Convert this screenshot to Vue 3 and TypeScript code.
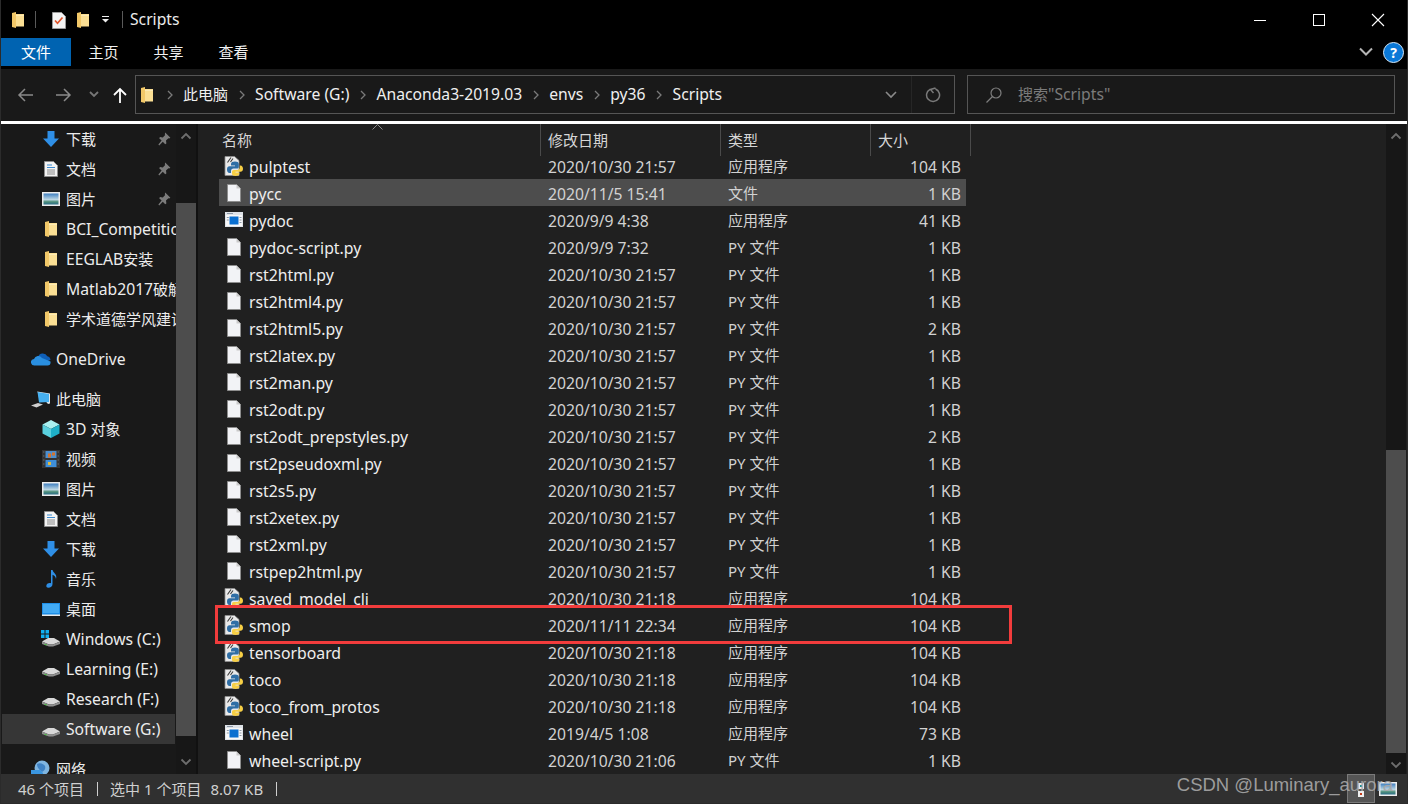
<script setup lang="ts">
interface NavItem { label: string; icon: string; sub: boolean; pin?: boolean; gap?: boolean; active?: boolean }
interface FileRow { name: string; date: string; type: string; size: string; icon: string; selected?: boolean }
interface Run { text: string; cjk: boolean }

const crumbs: string[] = ['此电脑', 'Software (G:)', 'Anaconda3-2019.03', 'envs', 'py36', 'Scripts']
const tabs: string[] = ['主页', '共享', '查看']
const searchLabel = '搜索"Scripts"'

function runs(text: string): Run[] {
  const parts = text.match(/[\u4e00-\u9fff]+|[^\u4e00-\u9fff]+/g) ?? []
  return parts.map((p) => ({ text: p, cjk: /[\u4e00-\u9fff]/.test(p) }))
}

const nav: NavItem[] = [
  { label: '下载', icon: 'i-down', sub: true, pin: true },
  { label: '文档', icon: 'i-doc', sub: true, pin: true },
  { label: '图片', icon: 'i-pic', sub: true, pin: true },
  { label: 'BCI_Competition', icon: 'i-folder', sub: true },
  { label: 'EEGLAB安装', icon: 'i-folder', sub: true },
  { label: 'Matlab2017破解版', icon: 'i-folder', sub: true },
  { label: '学术道德学风建设', icon: 'i-folder', sub: true },
  { label: 'OneDrive', icon: 'i-cloud', sub: false, gap: true },
  { label: '此电脑', icon: 'i-pc', sub: false, gap: true },
  { label: '3D 对象', icon: 'i-cube', sub: true },
  { label: '视频', icon: 'i-film', sub: true },
  { label: '图片', icon: 'i-pic', sub: true },
  { label: '文档', icon: 'i-doc', sub: true },
  { label: '下载', icon: 'i-down', sub: true },
  { label: '音乐', icon: 'i-music', sub: true },
  { label: '桌面', icon: 'i-desk', sub: true },
  { label: 'Windows (C:)', icon: 'i-win', sub: true },
  { label: 'Learning (E:)', icon: 'i-drive', sub: true },
  { label: 'Research (F:)', icon: 'i-drive', sub: true },
  { label: 'Software (G:)', icon: 'i-drive', sub: true, active: true },
  { label: '网络', icon: 'i-net', sub: false, gap: true }
]

const D = '2020/10/30 21:57'
const T = '2020/10/30 21:18'
const files: FileRow[] = [
  { name: 'pulptest', date: D, type: '应用程序', size: '104 KB', icon: 'i-py' },
  { name: 'pycc', date: '2020/11/5 15:41', type: '文件', size: '1 KB', icon: 'i-file', selected: true },
  { name: 'pydoc', date: '2020/9/9 4:38', type: '应用程序', size: '41 KB', icon: 'i-app' },
  { name: 'pydoc-script.py', date: '2020/9/9 7:32', type: 'PY 文件', size: '1 KB', icon: 'i-file' },
  { name: 'rst2html.py', date: D, type: 'PY 文件', size: '1 KB', icon: 'i-file' },
  { name: 'rst2html4.py', date: D, type: 'PY 文件', size: '1 KB', icon: 'i-file' },
  { name: 'rst2html5.py', date: D, type: 'PY 文件', size: '2 KB', icon: 'i-file' },
  { name: 'rst2latex.py', date: D, type: 'PY 文件', size: '1 KB', icon: 'i-file' },
  { name: 'rst2man.py', date: D, type: 'PY 文件', size: '1 KB', icon: 'i-file' },
  { name: 'rst2odt.py', date: D, type: 'PY 文件', size: '1 KB', icon: 'i-file' },
  { name: 'rst2odt_prepstyles.py', date: D, type: 'PY 文件', size: '2 KB', icon: 'i-file' },
  { name: 'rst2pseudoxml.py', date: D, type: 'PY 文件', size: '1 KB', icon: 'i-file' },
  { name: 'rst2s5.py', date: D, type: 'PY 文件', size: '1 KB', icon: 'i-file' },
  { name: 'rst2xetex.py', date: D, type: 'PY 文件', size: '1 KB', icon: 'i-file' },
  { name: 'rst2xml.py', date: D, type: 'PY 文件', size: '1 KB', icon: 'i-file' },
  { name: 'rstpep2html.py', date: D, type: 'PY 文件', size: '1 KB', icon: 'i-file' },
  { name: 'saved_model_cli', date: T, type: '应用程序', size: '104 KB', icon: 'i-py' },
  { name: 'smop', date: '2020/11/11 22:34', type: '应用程序', size: '104 KB', icon: 'i-py' },
  { name: 'tensorboard', date: T, type: '应用程序', size: '104 KB', icon: 'i-py' },
  { name: 'toco', date: T, type: '应用程序', size: '104 KB', icon: 'i-py' },
  { name: 'toco_from_protos', date: T, type: '应用程序', size: '104 KB', icon: 'i-py' },
  { name: 'wheel', date: '2019/4/5 1:08', type: '应用程序', size: '73 KB', icon: 'i-app' },
  { name: 'wheel-script.py', date: '2020/10/30 21:06', type: 'PY 文件', size: '1 KB', icon: 'i-file' }
]
</script>

<template>
  <div class="window">
    <svg class="defs" aria-hidden="true">
      <defs>
        <linearGradient id="sky" x1="0" y1="0" x2="0" y2="1">
          <stop offset="0" stop-color="#3f7fc0" />
          <stop offset="0.55" stop-color="#bcd7e4" />
          <stop offset="0.75" stop-color="#4f8f7a" />
          <stop offset="1" stop-color="#2c6e8a" />
        </linearGradient>
      </defs>
      <symbol id="i-folder" viewBox="0 0 20 20">
        <path fill="#fbdf94" d="M8 4h8v12.500H8z" />
        <path fill="#f2c869" d="M4 3l4-1v16l-4-1z" />
        <path fill="#fdeab5" d="M8 5h8v1H8z" />
      </symbol>
      <symbol id="i-note" viewBox="0 0 20 20">
        <path fill="#f4f4f4" stroke="#9a9a9a" d="M3.500 2.500h9l4 4v12h-13z" />
        <path fill="none" stroke="#e2552c" stroke-width="1.700" d="M6 10.500l2.500 2.800 5-5.800" />
      </symbol>
      <symbol id="i-down" viewBox="0 0 20 20">
        <path fill="#2f8fe6" d="M6.500 2h7v7.500H18L10 18 2 9.500h4.500z" />
      </symbol>
      <symbol id="i-doc" viewBox="0 0 20 20">
        <path fill="#f3f3f3" stroke="#8c8c8c" d="M3.500 2.500h9l4 4v11h-13z" />
        <path fill="none" stroke="#3d8bd0" stroke-width="1.200" d="M6 6h5M6 8.500h8" />
        <path fill="none" stroke="#8b8b8b" d="M6 11h8M6 13h8M6 15h8" />
      </symbol>
      <symbol id="i-pic" viewBox="0 0 20 20">
        <path fill="#ededed" d="M1 3h18v14H1z" />
        <path fill="url(#sky)" d="M2.500 4.500h15v11h-15z" />
      </symbol>
      <symbol id="i-cloud" viewBox="0 0 20 20">
        <path fill="#0f5fb8" d="M7 8a5 5 0 0 1 9.300-.800 4 4 0 0 1 3.200 3.800l-7 2.500-6-2.500z" />
        <path fill="#2a8fe0" d="M0 14a3.500 3.500 0 0 1 3-4 4.500 4.500 0 0 1 8-1l8.500 3.500a3.500 3.500 0 0 1-3 4H3.500A3.500 3.500 0 0 1 0 14z" />
      </symbol>
      <symbol id="i-pc" viewBox="0 0 20 20">
        <path fill="#dfe6ea" d="M6 2.500L19 4.500v10l-2 .4z" />
        <path fill="#46b0f0" d="M6.500 3l11.500 2v8l-10 .5z" />
        <path fill="#cfcfcf" d="M0 16.500l7-2.500 5 1.500-6.500 3z" />
      </symbol>
      <symbol id="i-cube" viewBox="0 0 20 20">
        <path fill="#a8f0f0" d="M10 1l8.500 4.500L10 10 1.500 5.500z" />
        <path fill="#5ad0de" d="M1.500 5.500L10 10v9l-8.500-4.500z" />
        <path fill="#1eb0c8" d="M18.500 5.500V14.500L10 19v-9z" />
      </symbol>
      <symbol id="i-film" viewBox="0 0 20 20">
        <path fill="#333" d="M1 1h18v18H1z" />
        <path fill="#4d4d4d" d="M2 2h1.500v2H2zM2 6h1.500v2H2zM2 10h1.500v2H2zM2 14h1.500v2H2zM16.500 2H18v2h-1.500zM16.500 6H18v2h-1.500zM16.500 10H18v2h-1.500zM16.500 14H18v2h-1.500z" />
        <path fill="#4c8fd0" d="M4.500 2h11v7h-11z" />
        <path fill="#d4742c" d="M7 4.500h3v4H7zM11 3.500h3v3h-3z" />
        <path fill="#3f8fd8" d="M4.500 11h11v7h-11z" />
        <path fill="#e3b93c" d="M7 13h3v3H7z" />
      </symbol>
      <symbol id="i-music" viewBox="0 0 20 20">
        <path fill="#2f8fe6" d="M10 1h1.600c.3 3 5 3.800 3.400 9-.4-3-2.200-4-3.500-4.300V15c0 2.500-2 3.800-4 3.800S5 17.500 5.500 16c.5-1.700 2.700-2.500 4.500-1.800z" />
      </symbol>
      <symbol id="i-desk" viewBox="0 0 20 20">
        <path fill="#1f8fe8" d="M1 4h18v12H1z" />
        <path fill="#42aaf4" d="M2 5h16v9H2z" />
        <path fill="#e8e8e8" d="M1 15.500h18V17H1z" />
      </symbol>
      <symbol id="i-drive" viewBox="0 0 20 20">
        <path fill="#d8d8d8" d="M1 12.500L7 9h6l6 3.500L12 15.500H8z" />
        <path fill="#8f8f8f" d="M1 12.500V15l7 2.500h4L19 15v-2.500l-7 3H8z" />
        <path fill="#4fc04a" d="M3.500 14.800l2.500.8v1l-2.500-.8z" />
      </symbol>
      <symbol id="i-win" viewBox="0 0 20 20">
        <path fill="#d8d8d8" d="M1 12.500L7 9h6l6 3.500L12 15.500H8z" />
        <path fill="#8f8f8f" d="M1 12.500V15l7 2.500h4L19 15v-2.500l-7 3H8z" />
        <path fill="#4fc04a" d="M3.500 14.800l2.500.8v1l-2.500-.8z" />
        <path fill="#10b0f0" d="M0 1h3.500v3.500H0zM4.500 1H8v3.500H4.500zM0 5.500h3.500V9H0zM4.500 5.500H8V9H4.500z" />
      </symbol>
      <symbol id="i-net" viewBox="0 0 20 20">
        <circle cx="11" cy="9" r="7.500" fill="#7fb5e0" />
        <path fill="#3f82c4" d="M6 5c3-2 7 0 8 2 1 3-1 5-3 6-2-2-5-4-5-8z" />
        <path fill="#3a96e0" d="M0 11h9l3 3v5H0z" />
      </symbol>
      <symbol id="i-file" viewBox="0 0 20 20">
        <path fill="#f2f3f6" stroke="#8d8d8d" d="M3.500 1.500h9l4 4v13h-13z" />
        <path fill="#c9c9c9" d="M12.500 1.500v4h4z" />
      </symbol>
      <symbol id="i-app" viewBox="0 0 20 20">
        <path fill="#dfe3e8" d="M1 2h18v15H1z" />
        <path fill="#f8f8f8" d="M2 5h16v11H2z" />
        <path fill="#0a6fd0" d="M5.500 6.500h9v8h-9z" />
        <path fill="#8d99a8" d="M15.500 7h2v1h-2zM15.500 9.500h2v1h-2zM15.500 12h2v1h-2zM2.800 7h2v1h-2zM2.800 9.500h2v1h-2zM3 3h6v1H3z" />
      </symbol>
      <symbol id="i-py" viewBox="0 0 20 20">
        <path fill="#e9e9e9" stroke="#8f8f8f" stroke-width="0.800" d="M1 .5h9.500l4.500 4v15H1z" />
        <path fill="none" stroke="#3b3b3b" stroke-width="1.100" d="M3.500 6.500l3.500-5M6.500 6l2.500-3.500" />
        <path fill="#2f6ea5" d="M11 5.500c-2.500 0-4 .8-4 2.500v1.500h4v.8H5.500C4 10.300 3 11.500 3 13.500S4 17 5.500 17H7v-2c0-1.500 1-2.500 2.500-2.500H13c1 0 1.800-.8 1.800-1.800V8c0-1.700-1.500-2.500-3.800-2.500z" />
        <path fill="#f7cf45" d="M15.800 9.500V11.500c0 1.500-1 2.500-2.500 2.500H9.800c-1 0-1.800.8-1.800 1.800V18c0 1.300 1.500 2 3.500 2s3.800-.7 3.800-2v-1.500h-3.800v-.8h5c1.500 0 2.500-1.200 2.500-3s-1-3.200-2.500-3.200z" />
      </symbol>
      <symbol id="i-pin" viewBox="0 0 20 20">
        <path fill="#7b7b7b" d="M11.500 2l6.500 6.500-1.500 1-1-.5-3 3 .5 3.500-1.500 1-3-3-4.500 4.500-1-1L7 12 4 9l1-1.500 3.500.5 3-3-.5-1z" />
      </symbol>
    </svg>

    <header class="titlebar">
      <div class="qat">
        <svg class="ic"><use href="#i-folder" /></svg>
        <span class="vsep first"></span>
        <svg class="ic note"><use href="#i-note" /></svg>
        <svg class="ic folder2"><use href="#i-folder" /></svg>
        <svg class="qat-arrow" width="9" height="7" viewBox="0 0 9 7"><path d="M1 0h7v1H1z" fill="#eee" /><path d="M1 3h7L4.500 6.500z" fill="#eee" /></svg>
        <span class="vsep second"></span>
        <span class="win-title">Scripts</span>
      </div>
      <div class="caption">
        <svg class="cap" width="14" height="14" viewBox="0 0 14 14"><path d="M1 7.500h12" stroke="#fff" stroke-width="1" /></svg>
        <svg class="cap" width="14" height="14" viewBox="0 0 14 14"><rect x="1.500" y="1.500" width="11" height="11" fill="none" stroke="#fff" /></svg>
        <svg class="cap" width="14" height="14" viewBox="0 0 14 14"><path d="M1 1l12 12M13 1L1 13" stroke="#fff" stroke-width="1.100" /></svg>
      </div>
    </header>

    <div class="ribbon">
      <div class="file-tab">文件</div>
      <div v-for="t in tabs" :key="t" class="tab">{{ t }}</div>
      <div class="ribbon-right">
        <svg width="16" height="10" viewBox="0 0 16 10"><path d="M2 1.500l6 6 6-6" fill="none" stroke="#b5b5b5" stroke-width="2" /></svg>
        <span class="help">?</span>
      </div>
    </div>

    <div class="navbar">
      <div class="nav-btns">
        <svg class="nb" width="16" height="14" viewBox="0 0 16 14"><path d="M16 7H2M8 1L2 7l6 6" fill="none" stroke="#8a8a8a" stroke-width="1.500" /></svg>
        <svg class="nb" width="16" height="14" viewBox="0 0 16 14"><path d="M0 7h14M8 1l6 6-6 6" fill="none" stroke="#8a8a8a" stroke-width="1.500" /></svg>
        <svg class="nb small" width="10" height="7" viewBox="0 0 10 7"><path d="M1 1l4 4 4-4" fill="none" stroke="#777" stroke-width="1.800" /></svg>
        <svg class="nb up" width="14" height="16" viewBox="0 0 14 16"><path d="M7 16V2M1 8l6-6 6 6" fill="none" stroke="#fff" stroke-width="1.800" /></svg>
      </div>
      <div class="address">
        <svg class="ic addr-folder"><use href="#i-folder" /></svg>
        <template v-for="(c, i) in crumbs" :key="c">
          <span class="crumb-sep" :class="{ first: i === 0 }">
            <svg width="6" height="10" viewBox="0 0 6 10"><path d="M1 1l4 4-4 4" fill="none" stroke="#7a7a7a" stroke-width="1.300" /></svg>
          </span>
          <span class="crumb" :class="{ zh: i === 0 }">{{ c }}</span>
        </template>
        <span class="addr-tools">
          <svg class="addr-chev" width="12" height="8" viewBox="0 0 12 8"><path d="M1 1l5 5 5-5" fill="none" stroke="#8a8a8a" stroke-width="1.600" /></svg>
          <span class="addr-refresh">
            <svg width="16" height="16" viewBox="0 0 16 16"><path d="M5 2.300a6.500 6.500 0 1 0 5.500-.3M10.500 1L5.500 2.500 8.500 6" fill="none" stroke="#7a7a7a" stroke-width="1.500" /></svg>
          </span>
        </span>
      </div>
      <div class="search">
        <svg width="18" height="18" viewBox="0 0 18 18"><circle cx="11" cy="7" r="5" fill="none" stroke="#7e7e7e" stroke-width="1.200" /><path d="M7.500 10.500L1.500 16.500" stroke="#7e7e7e" stroke-width="1.300" /></svg>
        <span class="search-text"><span v-for="(r, i) in runs(searchLabel)" :key="i" :class="{ cjk: r.cjk }">{{ r.text }}</span></span>
      </div>
    </div>
    <div class="white-line"></div>

    <div class="content">
      <aside class="sidebar">
        <div class="nav-list">
          <div
            v-for="(n, i) in nav"
            :key="i"
            class="nav-row"
            :class="{ sub: n.sub, gap: n.gap, active: n.active }"
          >
            <svg class="ic"><use :href="'#' + n.icon" /></svg>
            <span class="nav-label"><span v-for="(r, j) in runs(n.label)" :key="j" :class="{ cjk: r.cjk }">{{ r.text }}</span></span>
            <svg v-if="n.pin" class="pin"><use href="#i-pin" /></svg>
          </div>
        </div>
        <div class="side-scroll">
          <svg class="sb-arrow" width="12" height="8" viewBox="0 0 12 8"><path d="M1.500 6.500L6 2l4.500 4.500" fill="none" stroke="#6e6e6e" stroke-width="1.800" /></svg>
          <div class="side-track"><div class="side-thumb"></div></div>
          <svg class="sb-arrow" width="12" height="8" viewBox="0 0 12 8"><path d="M1.500 1.500L6 6l4.500-4.500" fill="none" stroke="#6e6e6e" stroke-width="1.800" /></svg>
        </div>
      </aside>

      <main class="main">
        <div class="list">
          <div class="head">
            <div class="hcell name">名称
              <svg class="sort" width="11" height="6" viewBox="0 0 11 6"><path d="M.5 5.500l5-5 5 5" fill="none" stroke="#8c8c8c" /></svg>
            </div>
            <div class="hcell date">修改日期</div>
            <div class="hcell type">类型</div>
            <div class="hcell size">大小</div>
          </div>
          <div class="rows">
            <div v-for="f in files" :key="f.name" class="row" :class="{ selected: f.selected }">
              <svg class="ic"><use :href="'#' + f.icon" /></svg>
              <span class="fname">{{ f.name }}</span>
              <span class="meta">{{ f.date }}</span>
              <span class="meta ty">{{ f.type }}</span>
              <span class="meta right">{{ f.size }}</span>
            </div>
          </div>
        </div>
        <div class="main-scroll">
          <svg class="sb-arrow" width="12" height="8" viewBox="0 0 12 8"><path d="M1.500 6.500L6 2l4.500 4.500" fill="none" stroke="#6e6e6e" stroke-width="1.800" /></svg>
          <div class="main-track"><div class="main-thumb"></div></div>
          <svg class="sb-arrow" width="12" height="8" viewBox="0 0 12 8"><path d="M1.500 1.500L6 6l4.500-4.500" fill="none" stroke="#6e6e6e" stroke-width="1.800" /></svg>
        </div>
        <div class="redbox"></div>
      </main>
    </div>

    <footer class="status">
      <span class="count">46 个项目</span>
      <span class="bar"></span>
      <span>选中 1 个项目</span>
      <span class="sel-size">8.07 KB</span>
      <span class="bar"></span>
      <span class="views">
        <span class="view on">
          <svg width="8" height="24" viewBox="0 0 8 24">
            <path fill="#eee" d="M1 6h6v6H1zM1 14h6v6H1z" /><path fill="#1f8a8a" d="M3 8h2v2H3z" /><path fill="#c23a1a" d="M3 16h2v2H3z" />
          </svg>
        </span>
        <svg class="view2"><use href="#i-pic" /></svg>
      </span>
      <span class="watermark">CSDN @Luminary_aurora</span>
    </footer>
  </div>
</template>

<style>
html, body { margin: 0; background: #2b2b2b; }
</style>

<style scoped>
.window {
  width: 1406px;
  height: 803px;
  margin: 0 1px;
  display: flex;
  flex-direction: column;
  overflow: hidden;
  font-family: "Noto Sans", "Noto Sans CJK SC", sans-serif;
  font-size: 15px;
  color: #e6e6e6;
  background: #000;
  position: relative;
}
.defs { position: absolute; width: 0; height: 0; }
.ic { width: 20px; height: 20px; flex: none; display: block; }
.cjk { font-size: 15px; }

.titlebar {
  height: 37px;
  margin-top: 1px;
  display: flex;
  justify-content: space-between;
  align-items: center;
  flex: none;
}
.qat { display: flex; align-items: center; padding-left: 7px; }
.vsep { width: 1px; height: 17px; background: #5a5a5a; }
.vsep.first { margin-left: 7px; margin-right: 8px; }
.note { margin-left: 5px; }
.folder2 { margin-left: 4px; }
.qat-arrow { margin-left: 8px; margin-right: 12px; }
.vsep.second { margin-right: 7px; }
.win-title { font-size: 15.700px; color: #eaeaea; line-height: 20px; padding-bottom: 2px; }
.caption { display: flex; gap: 45px; padding-right: 22px; }
.cap { display: block; }

.ribbon { height: 31px; flex: none; display: flex; align-items: flex-start; }
.file-tab {
  width: 70px;
  height: 28px;
  line-height: 28px;
  background: #0063b1;
  color: #fff;
  text-align: center;
}
.tab { width: 65px; height: 28px; line-height: 28px; text-align: center; color: #f2f2f2; }
.ribbon-right { margin-left: auto; display: flex; align-items: center; gap: 9px; height: 28px; padding-right: 3px; }
.help {
  width: 19px;
  height: 19px;
  border-radius: 50%;
  background: #0a78d7;
  border: 1px solid #d6e8f8;
  color: #fff;
  font-size: 14px;
  font-weight: 700;
  line-height: 19px;
  text-align: center;
}

.navbar {
  height: 52px;
  flex: none;
  background: #191919;
  display: flex;
  align-items: flex-start;
  padding-top: 6px;
  box-sizing: border-box;
}
.nav-btns { width: 134px; height: 39px; display: flex; align-items: center; flex: none; padding-left: 16px; box-sizing: border-box; }
.nb { display: block; }
.nb + .nb { margin-left: 23px; }
.nb.small { margin-left: 17px; }
.nb.up { margin-left: 14px; }
.address {
  width: 820px;
  height: 39px;
  box-sizing: border-box;
  border: 1px solid #555;
  display: flex;
  align-items: center;
  flex: none;
  color: #efefef;
  margin-right: 12px;
}
.addr-folder { margin-left: 1px; }
.crumb-sep { width: 27px; display: flex; justify-content: center; flex: none; }
.crumb-sep.first { width: 26px; }
.crumb { white-space: nowrap; font-size: 15.700px; line-height: 20px; padding-bottom: 2px; }
.crumb.zh { font-size: 15px; }
.addr-tools { margin-left: auto; display: flex; align-items: center; height: 100%; }
.addr-chev { margin-right: 14px; display: block; }
.addr-refresh {
  width: 42px;
  height: 100%;
  display: flex;
  align-items: center;
  justify-content: center;
  border-left: 1px solid #262626;
}
.search {
  width: 428px;
  height: 39px;
  box-sizing: border-box;
  border: 1px solid #555;
  display: flex;
  align-items: center;
  gap: 15px;
  padding-left: 17px;
  color: #7b7b7b;
  flex: none;
}
.search-text { font-size: 15.700px; line-height: 20px; padding-bottom: 2px; }
.white-line { height: 3px; background: #fff; flex: none; }

.content { flex: 1; min-height: 0; display: flex; }
.sidebar { width: 195px; flex: none; display: flex; background: #191919; border-right: 2px solid #111; }
.nav-list { width: 175px; flex: none; overflow: hidden; }
.nav-row {
  height: 30px;
  display: flex;
  align-items: center;
  gap: 5px;
  padding-left: 30px;
  box-sizing: border-box;
  white-space: nowrap;
  color: #ececec;
  overflow: hidden;
  font-size: 15.700px;
}
.nav-row.sub { padding-left: 40px; }
.nav-row.gap { margin-top: 10px; }
.nav-row.active { background: #363636; margin-left: 1px; padding-left: 39px; margin-right: 1px; }
.nav-label { flex: 1; min-width: 0; overflow: hidden; }
.pin { width: 16px; height: 16px; flex: none; margin-right: 4px; }

.side-scroll, .main-scroll {
  width: 20px;
  flex: none;
  display: flex;
  flex-direction: column;
  align-items: center;
  background: #171717;
}
.sb-arrow { flex: none; display: block; margin: 8px 0; }
.side-track, .main-track { flex: 1; width: 100%; display: flex; flex-direction: column; }
.side-thumb { height: 533px; margin-top: 55px; background: #4d4d4d; }
.main-thumb { height: 303px; margin-top: 302px; background: #4d4d4d; }

.main { flex: 1; min-width: 0; display: flex; background: #202020; position: relative; }
.list { flex: 1; min-width: 0; }
.head { height: 28px; display: flex; position: relative; color: #d6d6d6; font-size: 15px; }
.hcell {
  height: 32px;
  box-sizing: border-box;
  border-right: 1px solid #4a4a4a;
  padding-top: 5px;
  padding-left: 7px;
  flex: none;
  position: relative;
}
.hcell.name { width: 343px; padding-left: 24px; }
.hcell.date { width: 180px; }
.hcell.type { width: 150px; }
.hcell.size { width: 100px; }
.sort { position: absolute; left: 174px; top: 0; }
.rows { margin-left: 21px; width: 747px; }
.row {
  height: 27px;
  display: grid;
  grid-template-columns: 30px 299px 180px 1fr 70px;
  align-items: center;
  white-space: nowrap;
  padding-right: 5px;
  box-sizing: border-box;
}
.row .ic { margin-left: 5px; }
.row.selected { background: #4d4d4d; }
.fname { color: #eee; font-size: 15.800px; line-height: 20px; padding-top: 2px; }
.meta { color: #d2d2d2; font-size: 15.700px; line-height: 20px; padding-top: 2px; }
.meta.ty { font-size: 15px; padding-top: 0; }
.meta.right { text-align: right; }
.main-scroll { margin-right: 1px; }

.redbox {
  position: absolute;
  left: 17px;
  top: 481px;
  width: 797px;
  height: 39px;
  border: 3px solid #f23c3c;
  box-sizing: border-box;
  pointer-events: none;
}

.status {
  height: 29px;
  flex: none;
  background: #303030;
  display: flex;
  align-items: center;
  padding-left: 17px;
  color: #cfcfcf;
  position: relative;
  white-space: nowrap;
}
.bar { width: 1px; height: 14px; background: #cfcfcf; margin: 0 12px 0 13px; }
.sel-size { margin-left: 9px; }
.views { margin-left: auto; display: flex; align-items: center; padding-right: 9px; height: 100%; }
.view { width: 26px; height: 27px; border: 1px solid #7a7a7a; background: #555; display: flex; align-items: center; justify-content: center; }
.view2 { width: 20px; height: 20px; margin-left: 3px; }
.watermark {
  position: absolute;
  right: 14px;
  top: 0;
  font-family: "Liberation Sans", sans-serif;
  font-size: 18.500px;
  color: #a8a8a8;
  opacity: 0.9;
}
</style>
